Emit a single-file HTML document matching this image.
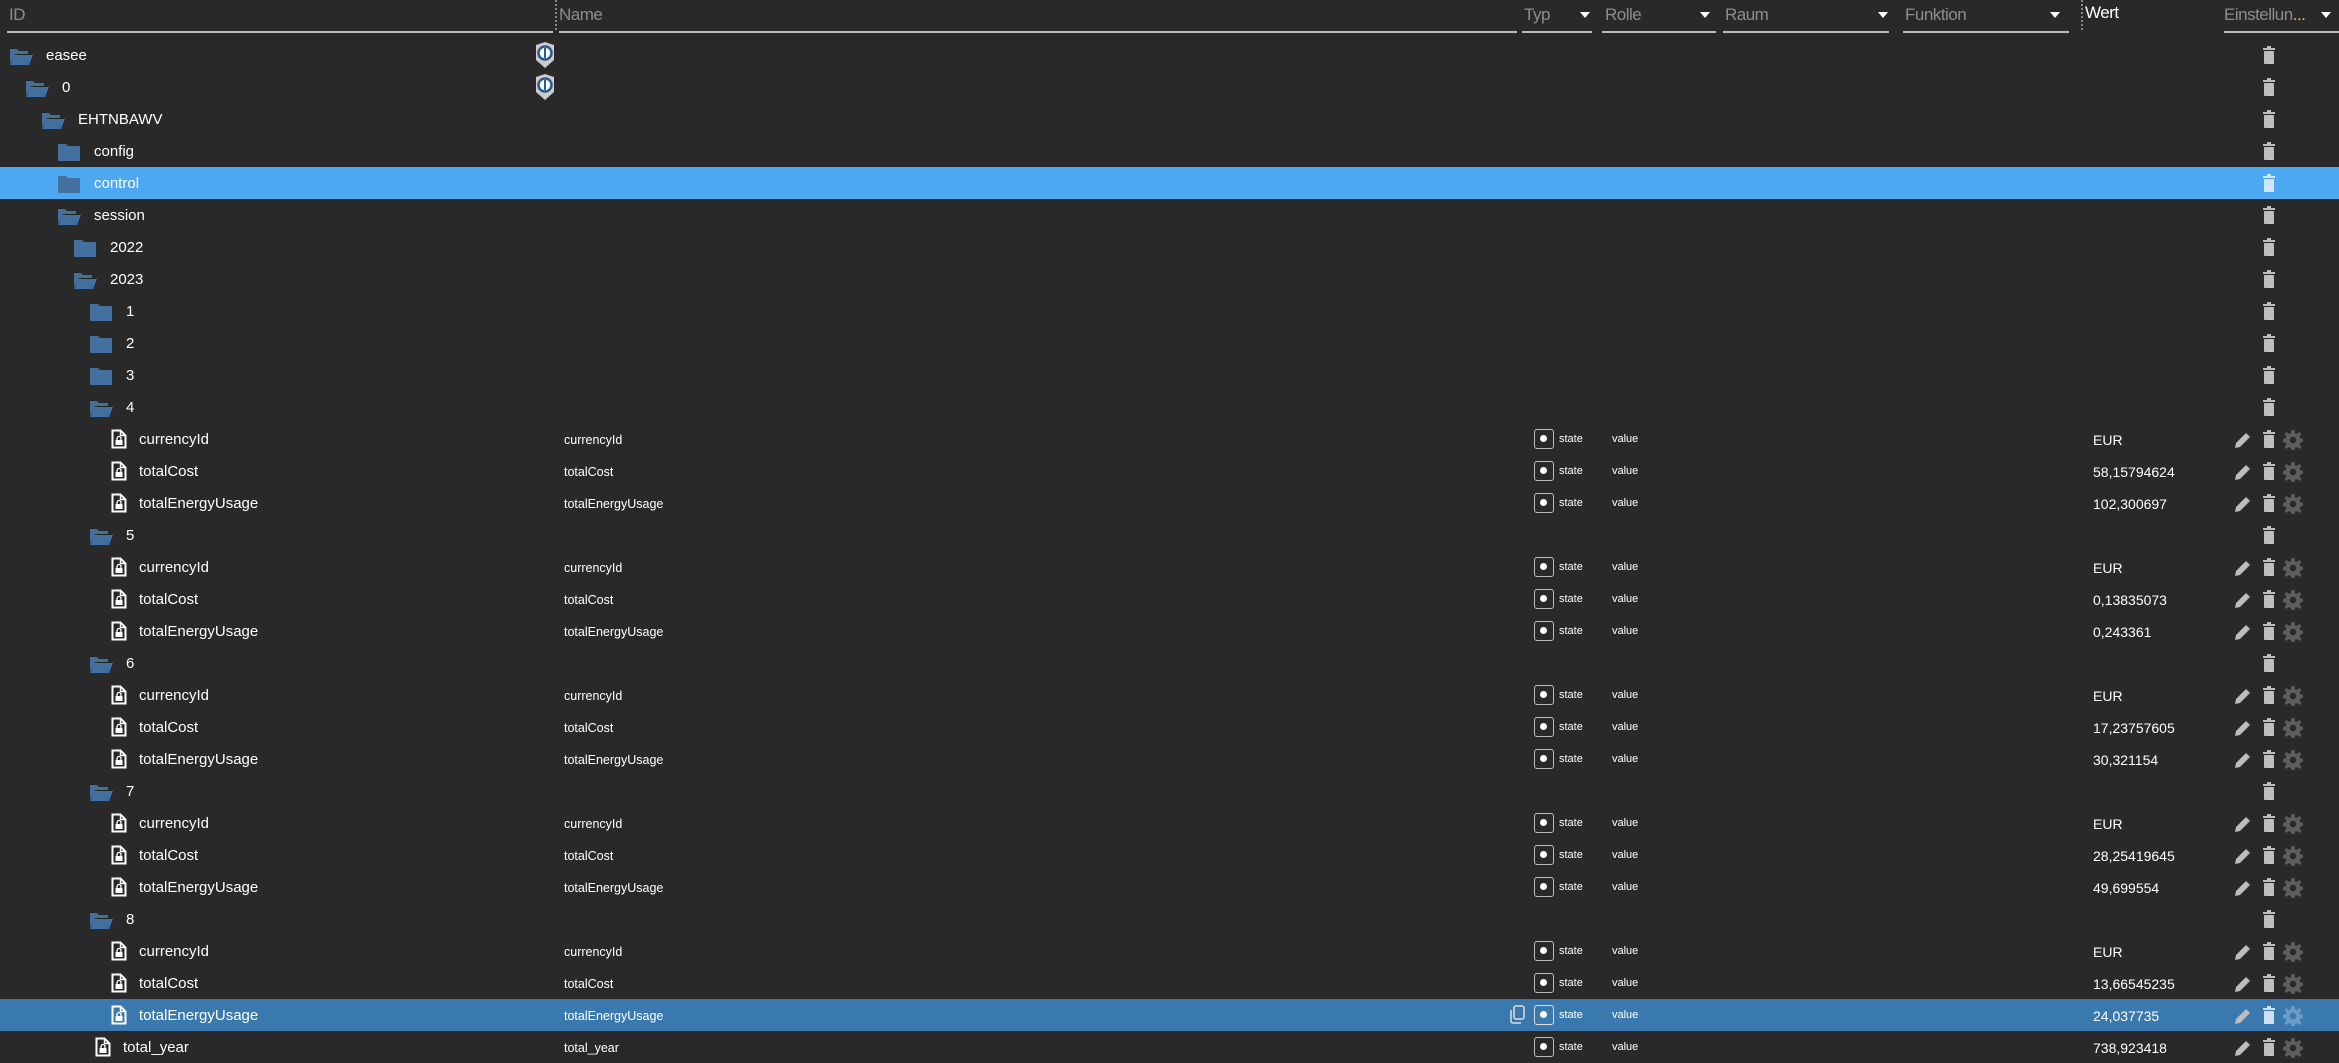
<!DOCTYPE html>
<html><head><meta charset="utf-8"><style>
*{margin:0;padding:0;box-sizing:border-box}
body{width:2339px;height:1063px;background:#292929;font-family:"Liberation Sans",sans-serif;color:#fff;overflow:hidden;position:relative}
.h{position:absolute;top:0;height:39px;font-size:17px;color:#8d8d8d;}
.h span{position:absolute;top:5px;letter-spacing:-0.5px}
.hl{position:absolute;top:31px;height:2px;background:#bdbdbd}
.tri{position:absolute;top:12px;width:0;height:0;border-left:5px solid transparent;border-right:5px solid transparent;border-top:6px solid #fff}
.r{position:absolute;left:0;width:2339px;height:32px}
.r.sel{background:#4da8f2}
.r.sel2{background:#3a79ad}
.t{position:absolute;top:8px;font-size:15px;color:#fff}
.n{position:absolute;left:564px;top:10px;font-size:12.5px}
.ic{position:absolute}
.ty{position:absolute;left:1534px;top:6px;width:20px;height:20px;border:1.5px solid #bbb;border-radius:3px}
.ty:after{content:"";position:absolute;left:5px;top:5px;width:7px;height:7px;border-radius:50%;background:#fff}
.st{position:absolute;left:1559px;top:10px;font-size:11px}
.va{position:absolute;left:1612px;top:10px;font-size:11px}
.w{position:absolute;left:2093px;top:9px;font-size:14px}
.tr{position:absolute;left:2262px;top:7px}
.ed{position:absolute;left:2234px;top:8px}
.gr{position:absolute;left:2283px;top:7px;color:#5e5e5e}
</style></head><body>
<svg width="0" height="0" style="position:absolute">
<defs>
<symbol id="fo" viewBox="0 0 24 20"><path d="M1 3h7l2 2h9v3H6L1 17z" fill="#43709f"/><path d="M5 9h19l-4 10H1z" fill="#43709f"/></symbol>
<symbol id="fc" viewBox="0 0 24 20"><path d="M1 2h8l2 2h12v15H1z" fill="#43709f"/></symbol>
<symbol id="fi" viewBox="0 0 16 20"><path d="M1.5 1.5h8l5 5v12h-13z" fill="none" stroke="#fff" stroke-width="2"/><path d="M9.5 1.5v5h5" fill="none" stroke="#fff" stroke-width="1.5"/><rect x="4.5" y="11" width="7" height="5" fill="#fff"/><path d="M6 11V9.5a2 2 0 0 1 4 0V11" fill="none" stroke="#fff" stroke-width="1.3"/></symbol>
<symbol id="tr" viewBox="0 0 14 18"><rect x="1" y="2" width="12" height="2" fill="currentColor"/><rect x="5" y="0" width="4" height="2" fill="currentColor"/><rect x="2" y="5" width="10" height="13" rx="1" fill="currentColor"/></symbol>
<symbol id="ed" viewBox="0 0 18 18"><path d="M1 17l1-5L12 2l4 4L6 16z" fill="#bdbdbd"/></symbol>
<symbol id="gr" viewBox="0 0 20 20"><path fill="currentColor" fill-rule="evenodd" d="M8.5 0h3l.5 3 2 1 2.5-2 2 2-2 2.5 1 2 3 .5v3l-3 .5-1 2 2 2.5-2 2-2.5-2-2 1-.5 3h-3l-.5-3-2-1-2.5 2-2-2 2-2.5-1-2-3-.5v-3l3-.5 1-2-2-2.5 2-2 2.5 2 2-1zM10 6.8a3.2 3.2 0 1 0 0 6.4a3.2 3.2 0 1 0 0-6.4z"/></symbol>
<symbol id="sh" viewBox="0 0 20 26"><path d="M1 3l9-3 9 3v15l-9 8-9-8z" fill="#ccc"/><circle cx="10" cy="11" r="6.5" fill="#fff" stroke="#2b5c8e" stroke-width="2.5"/><rect x="9" y="6" width="2" height="10" fill="#2b5c8e"/></symbol>
</defs></svg>

<div class="h" style="left:0;width:2339px">
<span style="left:9px">ID</span><div class="hl" style="left:7px;width:546px;top:31px;height:2px"></div>
<div style="position:absolute;left:555px;top:0;height:30px;border-left:2px dotted #888"></div>
<span style="left:559px">Name</span><div class="hl" style="left:559px;width:958px"></div>
<span style="left:1524px">Typ</span><div class="tri" style="left:1580px"></div><div class="hl" style="left:1522px;width:70px"></div>
<span style="left:1605px">Rolle</span><div class="tri" style="left:1700px"></div><div class="hl" style="left:1602px;width:114px"></div>
<span style="left:1725px">Raum</span><div class="tri" style="left:1878px"></div><div class="hl" style="left:1723px;width:166px"></div>
<span style="left:1905px">Funktion</span><div class="tri" style="left:2050px"></div><div class="hl" style="left:1903px;width:166px"></div>
<div style="position:absolute;left:2081px;top:0;height:30px;border-left:2px dotted #888"></div>
<span style="left:2085px;color:#fff;top:3px">Wert</span>
<span style="left:2224px">Einstellun<b style="color:#e6c34a;font-weight:normal">...</b></span><div class="tri" style="left:2321px"></div><div class="hl" style="left:2224px;width:115px"></div>
</div>

<div class="r" style="top:39px"><svg class="ic" style="left:9px;top:7px" width="24" height="20"><use href="#fo"/></svg><div class="t" style="left:46px">easee</div><svg class="ic" style="left:535px;top:3px" width="20" height="26"><use href="#sh"/></svg><svg class="tr" width="14" height="18" style="color:#bdbdbd"><use href="#tr"/></svg></div>
<div class="r" style="top:71px"><svg class="ic" style="left:25px;top:7px" width="24" height="20"><use href="#fo"/></svg><div class="t" style="left:62px">0</div><svg class="ic" style="left:535px;top:3px" width="20" height="26"><use href="#sh"/></svg><svg class="tr" width="14" height="18" style="color:#bdbdbd"><use href="#tr"/></svg></div>
<div class="r" style="top:103px"><svg class="ic" style="left:41px;top:7px" width="24" height="20"><use href="#fo"/></svg><div class="t" style="left:78px">EHTNBAWV</div><svg class="tr" width="14" height="18" style="color:#bdbdbd"><use href="#tr"/></svg></div>
<div class="r" style="top:135px"><svg class="ic" style="left:57px;top:7px" width="24" height="20"><use href="#fc"/></svg><div class="t" style="left:94px">config</div><svg class="tr" width="14" height="18" style="color:#bdbdbd"><use href="#tr"/></svg></div>
<div class="r sel" style="top:167px"><svg class="ic" style="left:57px;top:7px" width="24" height="20"><use href="#fc"/></svg><div class="t" style="left:94px">control</div><svg class="tr" width="14" height="18" style="color:#cfe6fb"><use href="#tr"/></svg></div>
<div class="r" style="top:199px"><svg class="ic" style="left:57px;top:7px" width="24" height="20"><use href="#fo"/></svg><div class="t" style="left:94px">session</div><svg class="tr" width="14" height="18" style="color:#bdbdbd"><use href="#tr"/></svg></div>
<div class="r" style="top:231px"><svg class="ic" style="left:73px;top:7px" width="24" height="20"><use href="#fc"/></svg><div class="t" style="left:110px">2022</div><svg class="tr" width="14" height="18" style="color:#bdbdbd"><use href="#tr"/></svg></div>
<div class="r" style="top:263px"><svg class="ic" style="left:73px;top:7px" width="24" height="20"><use href="#fo"/></svg><div class="t" style="left:110px">2023</div><svg class="tr" width="14" height="18" style="color:#bdbdbd"><use href="#tr"/></svg></div>
<div class="r" style="top:295px"><svg class="ic" style="left:89px;top:7px" width="24" height="20"><use href="#fc"/></svg><div class="t" style="left:126px">1</div><svg class="tr" width="14" height="18" style="color:#bdbdbd"><use href="#tr"/></svg></div>
<div class="r" style="top:327px"><svg class="ic" style="left:89px;top:7px" width="24" height="20"><use href="#fc"/></svg><div class="t" style="left:126px">2</div><svg class="tr" width="14" height="18" style="color:#bdbdbd"><use href="#tr"/></svg></div>
<div class="r" style="top:359px"><svg class="ic" style="left:89px;top:7px" width="24" height="20"><use href="#fc"/></svg><div class="t" style="left:126px">3</div><svg class="tr" width="14" height="18" style="color:#bdbdbd"><use href="#tr"/></svg></div>

<div class="r" style="top:391px"><svg class="ic" style="left:89px;top:7px" width="24" height="20"><use href="#fo"/></svg><div class="t" style="left:126px">4</div><svg class="tr" width="14" height="18" style="color:#bdbdbd"><use href="#tr"/></svg></div>
<div class="r" style="top:423px"><svg class="ic" style="left:111px;top:6px" width="16" height="20"><use href="#fi"/></svg><div class="t" style="left:139px">currencyId</div><div class="n">currencyId</div><div class="ty"></div><div class="st">state</div><div class="va">value</div><div class="w">EUR</div><svg class="ed" width="18" height="18"><use href="#ed"/></svg><svg class="tr" width="14" height="18" style="color:#bdbdbd"><use href="#tr"/></svg><svg class="gr" width="20" height="20"><use href="#gr"/></svg></div>
<div class="r" style="top:455px"><svg class="ic" style="left:111px;top:6px" width="16" height="20"><use href="#fi"/></svg><div class="t" style="left:139px">totalCost</div><div class="n">totalCost</div><div class="ty"></div><div class="st">state</div><div class="va">value</div><div class="w">58,15794624</div><svg class="ed" width="18" height="18"><use href="#ed"/></svg><svg class="tr" width="14" height="18" style="color:#bdbdbd"><use href="#tr"/></svg><svg class="gr" width="20" height="20"><use href="#gr"/></svg></div>
<div class="r" style="top:487px"><svg class="ic" style="left:111px;top:6px" width="16" height="20"><use href="#fi"/></svg><div class="t" style="left:139px">totalEnergyUsage</div><div class="n">totalEnergyUsage</div><div class="ty"></div><div class="st">state</div><div class="va">value</div><div class="w">102,300697</div><svg class="ed" width="18" height="18"><use href="#ed"/></svg><svg class="tr" width="14" height="18" style="color:#bdbdbd"><use href="#tr"/></svg><svg class="gr" width="20" height="20"><use href="#gr"/></svg></div>

<div class="r" style="top:519px"><svg class="ic" style="left:89px;top:7px" width="24" height="20"><use href="#fo"/></svg><div class="t" style="left:126px">5</div><svg class="tr" width="14" height="18" style="color:#bdbdbd"><use href="#tr"/></svg></div>
<div class="r" style="top:551px"><svg class="ic" style="left:111px;top:6px" width="16" height="20"><use href="#fi"/></svg><div class="t" style="left:139px">currencyId</div><div class="n">currencyId</div><div class="ty"></div><div class="st">state</div><div class="va">value</div><div class="w">EUR</div><svg class="ed" width="18" height="18"><use href="#ed"/></svg><svg class="tr" width="14" height="18" style="color:#bdbdbd"><use href="#tr"/></svg><svg class="gr" width="20" height="20"><use href="#gr"/></svg></div>
<div class="r" style="top:583px"><svg class="ic" style="left:111px;top:6px" width="16" height="20"><use href="#fi"/></svg><div class="t" style="left:139px">totalCost</div><div class="n">totalCost</div><div class="ty"></div><div class="st">state</div><div class="va">value</div><div class="w">0,13835073</div><svg class="ed" width="18" height="18"><use href="#ed"/></svg><svg class="tr" width="14" height="18" style="color:#bdbdbd"><use href="#tr"/></svg><svg class="gr" width="20" height="20"><use href="#gr"/></svg></div>
<div class="r" style="top:615px"><svg class="ic" style="left:111px;top:6px" width="16" height="20"><use href="#fi"/></svg><div class="t" style="left:139px">totalEnergyUsage</div><div class="n">totalEnergyUsage</div><div class="ty"></div><div class="st">state</div><div class="va">value</div><div class="w">0,243361</div><svg class="ed" width="18" height="18"><use href="#ed"/></svg><svg class="tr" width="14" height="18" style="color:#bdbdbd"><use href="#tr"/></svg><svg class="gr" width="20" height="20"><use href="#gr"/></svg></div>

<div class="r" style="top:647px"><svg class="ic" style="left:89px;top:7px" width="24" height="20"><use href="#fo"/></svg><div class="t" style="left:126px">6</div><svg class="tr" width="14" height="18" style="color:#bdbdbd"><use href="#tr"/></svg></div>
<div class="r" style="top:679px"><svg class="ic" style="left:111px;top:6px" width="16" height="20"><use href="#fi"/></svg><div class="t" style="left:139px">currencyId</div><div class="n">currencyId</div><div class="ty"></div><div class="st">state</div><div class="va">value</div><div class="w">EUR</div><svg class="ed" width="18" height="18"><use href="#ed"/></svg><svg class="tr" width="14" height="18" style="color:#bdbdbd"><use href="#tr"/></svg><svg class="gr" width="20" height="20"><use href="#gr"/></svg></div>
<div class="r" style="top:711px"><svg class="ic" style="left:111px;top:6px" width="16" height="20"><use href="#fi"/></svg><div class="t" style="left:139px">totalCost</div><div class="n">totalCost</div><div class="ty"></div><div class="st">state</div><div class="va">value</div><div class="w">17,23757605</div><svg class="ed" width="18" height="18"><use href="#ed"/></svg><svg class="tr" width="14" height="18" style="color:#bdbdbd"><use href="#tr"/></svg><svg class="gr" width="20" height="20"><use href="#gr"/></svg></div>
<div class="r" style="top:743px"><svg class="ic" style="left:111px;top:6px" width="16" height="20"><use href="#fi"/></svg><div class="t" style="left:139px">totalEnergyUsage</div><div class="n">totalEnergyUsage</div><div class="ty"></div><div class="st">state</div><div class="va">value</div><div class="w">30,321154</div><svg class="ed" width="18" height="18"><use href="#ed"/></svg><svg class="tr" width="14" height="18" style="color:#bdbdbd"><use href="#tr"/></svg><svg class="gr" width="20" height="20"><use href="#gr"/></svg></div>

<div class="r" style="top:775px"><svg class="ic" style="left:89px;top:7px" width="24" height="20"><use href="#fo"/></svg><div class="t" style="left:126px">7</div><svg class="tr" width="14" height="18" style="color:#bdbdbd"><use href="#tr"/></svg></div>
<div class="r" style="top:807px"><svg class="ic" style="left:111px;top:6px" width="16" height="20"><use href="#fi"/></svg><div class="t" style="left:139px">currencyId</div><div class="n">currencyId</div><div class="ty"></div><div class="st">state</div><div class="va">value</div><div class="w">EUR</div><svg class="ed" width="18" height="18"><use href="#ed"/></svg><svg class="tr" width="14" height="18" style="color:#bdbdbd"><use href="#tr"/></svg><svg class="gr" width="20" height="20"><use href="#gr"/></svg></div>
<div class="r" style="top:839px"><svg class="ic" style="left:111px;top:6px" width="16" height="20"><use href="#fi"/></svg><div class="t" style="left:139px">totalCost</div><div class="n">totalCost</div><div class="ty"></div><div class="st">state</div><div class="va">value</div><div class="w">28,25419645</div><svg class="ed" width="18" height="18"><use href="#ed"/></svg><svg class="tr" width="14" height="18" style="color:#bdbdbd"><use href="#tr"/></svg><svg class="gr" width="20" height="20"><use href="#gr"/></svg></div>
<div class="r" style="top:871px"><svg class="ic" style="left:111px;top:6px" width="16" height="20"><use href="#fi"/></svg><div class="t" style="left:139px">totalEnergyUsage</div><div class="n">totalEnergyUsage</div><div class="ty"></div><div class="st">state</div><div class="va">value</div><div class="w">49,699554</div><svg class="ed" width="18" height="18"><use href="#ed"/></svg><svg class="tr" width="14" height="18" style="color:#bdbdbd"><use href="#tr"/></svg><svg class="gr" width="20" height="20"><use href="#gr"/></svg></div>

<div class="r" style="top:903px"><svg class="ic" style="left:89px;top:7px" width="24" height="20"><use href="#fo"/></svg><div class="t" style="left:126px">8</div><svg class="tr" width="14" height="18" style="color:#bdbdbd"><use href="#tr"/></svg></div>
<div class="r" style="top:935px"><svg class="ic" style="left:111px;top:6px" width="16" height="20"><use href="#fi"/></svg><div class="t" style="left:139px">currencyId</div><div class="n">currencyId</div><div class="ty"></div><div class="st">state</div><div class="va">value</div><div class="w">EUR</div><svg class="ed" width="18" height="18"><use href="#ed"/></svg><svg class="tr" width="14" height="18" style="color:#bdbdbd"><use href="#tr"/></svg><svg class="gr" width="20" height="20"><use href="#gr"/></svg></div>
<div class="r" style="top:967px"><svg class="ic" style="left:111px;top:6px" width="16" height="20"><use href="#fi"/></svg><div class="t" style="left:139px">totalCost</div><div class="n">totalCost</div><div class="ty"></div><div class="st">state</div><div class="va">value</div><div class="w">13,66545235</div><svg class="ed" width="18" height="18"><use href="#ed"/></svg><svg class="tr" width="14" height="18" style="color:#bdbdbd"><use href="#tr"/></svg><svg class="gr" width="20" height="20"><use href="#gr"/></svg></div>
<div class="r sel2" style="top:999px"><svg class="ic" style="left:111px;top:6px" width="16" height="20"><use href="#fi"/></svg><div class="t" style="left:139px">totalEnergyUsage</div><div class="n">totalEnergyUsage</div>
<svg class="ic" style="left:1509px;top:6px" width="16" height="20" viewBox="0 0 16 20"><rect x="5" y="1" width="10" height="13" rx="2" fill="none" stroke="#ddd" stroke-width="1.5"/><path d="M2 5v11a2 2 0 0 0 2 2h8" fill="none" stroke="#ddd" stroke-width="1.5"/></svg>
<div class="ty" style="border-color:#ddd"></div><div class="st">state</div><div class="va">value</div><div class="w">24,037735</div><svg class="ed" width="18" height="18"><use href="#ed"/></svg><svg class="tr" width="14" height="18" style="color:#cfe0ee"><use href="#tr"/></svg><svg class="gr" width="20" height="20" style="color:#6d9cc6"><use href="#gr"/></svg></div>
<div class="r" style="top:1031px"><svg class="ic" style="left:95px;top:6px" width="16" height="20"><use href="#fi"/></svg><div class="t" style="left:123px">total_year</div><div class="n">total_year</div><div class="ty"></div><div class="st">state</div><div class="va">value</div><div class="w">738,923418</div><svg class="ed" width="18" height="18"><use href="#ed"/></svg><svg class="tr" width="14" height="18" style="color:#bdbdbd"><use href="#tr"/></svg><svg class="gr" width="20" height="20"><use href="#gr"/></svg></div>
</body></html>
